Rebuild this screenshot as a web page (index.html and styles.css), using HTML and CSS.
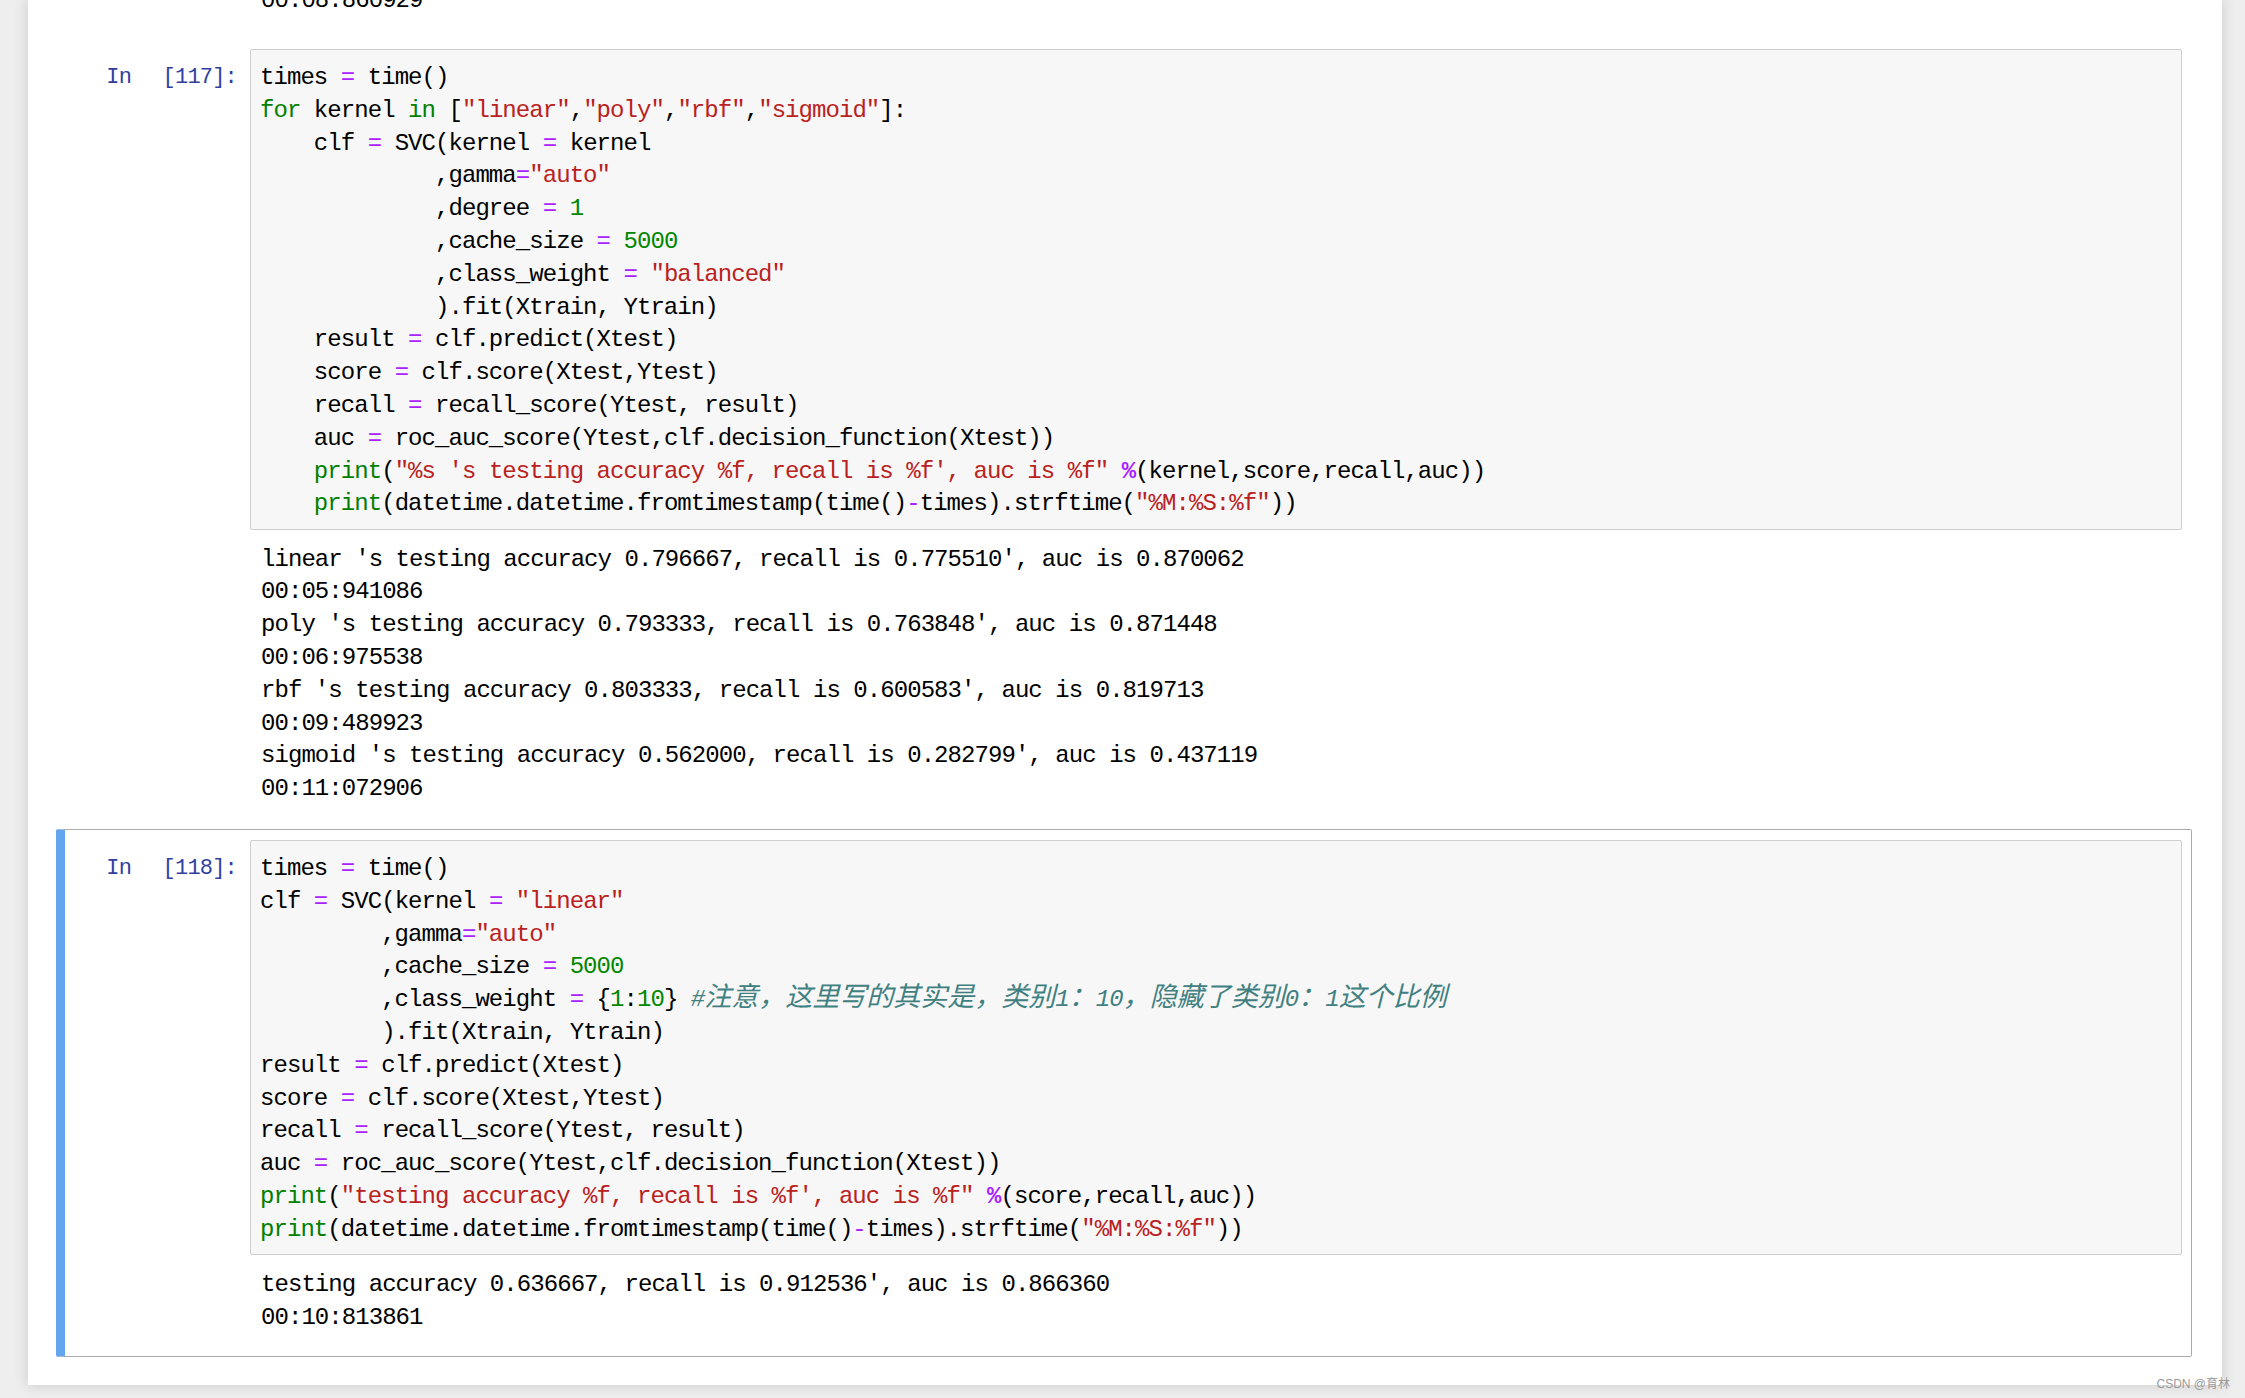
FILE: index.html
```html
<!DOCTYPE html>
<html lang="en">

<head>
  <meta charset="UTF-8" />
  <title>SVC kernels - Notebook</title>
  <link rel="stylesheet" href="styles.css">
</head>

<body>

  <div class="notebook">

    <!-- Tail of the previous cell output -->
    <div class="prev-output">
      <pre>00:08:860929</pre>
    </div>

    <!-- Cell 117 -->
    <div class="cell">
      <div class="input">
        <div class="prompt">In <span>[117]:</span></div>
        <pre class="input-area">times <span class="op">=</span> time()
<span class="kw">for</span> kernel <span class="kw">in</span> [<span class="str">"linear"</span>,<span class="str">"poly"</span>,<span class="str">"rbf"</span>,<span class="str">"sigmoid"</span>]:
    clf <span class="op">=</span> SVC(kernel <span class="op">=</span> kernel
             ,gamma<span class="op">=</span><span class="str">"auto"</span>
             ,degree <span class="op">=</span> <span class="num">1</span>
             ,cache_size <span class="op">=</span> <span class="num">5000</span>
             ,class_weight <span class="op">=</span> <span class="str">"balanced"</span>
             ).fit(Xtrain, Ytrain)
    result <span class="op">=</span> clf.predict(Xtest)
    score <span class="op">=</span> clf.score(Xtest,Ytest)
    recall <span class="op">=</span> recall_score(Ytest, result)
    auc <span class="op">=</span> roc_auc_score(Ytest,clf.decision_function(Xtest))
    <span class="bi">print</span>(<span class="str">"%s 's testing accuracy %f, recall is %f', auc is %f"</span> <span class="op bold">%</span>(kernel,score,recall,auc))
    <span class="bi">print</span>(datetime.datetime.fromtimestamp(time()<span class="op">-</span>times).strftime(<span class="str">"%M:%S:%f"</span>))</pre>
      </div>
      <div class="output">
        <pre>linear 's testing accuracy 0.796667, recall is 0.775510', auc is 0.870062
00:05:941086
poly 's testing accuracy 0.793333, recall is 0.763848', auc is 0.871448
00:06:975538
rbf 's testing accuracy 0.803333, recall is 0.600583', auc is 0.819713
00:09:489923
sigmoid 's testing accuracy 0.562000, recall is 0.282799', auc is 0.437119
00:11:072906</pre>
      </div>
    </div>

    <!-- Cell 118 (selected) -->
    <div class="cell selected">
      <div class="input">
        <div class="prompt">In <span>[118]:</span></div>
        <pre class="input-area">times <span class="op">=</span> time()
clf <span class="op">=</span> SVC(kernel <span class="op">=</span> <span class="str">"linear"</span>
         ,gamma<span class="op">=</span><span class="str">"auto"</span>
         ,cache_size <span class="op">=</span> <span class="num">5000</span>
         ,class_weight <span class="op">=</span> {<span class="num">1</span>:<span class="num">10</span>} <span class="cm">#<span class="cjk">注意，这里写的其实是，类别</span>1<span class="cjk">：</span>10<span class="cjk">，隐藏了类别</span>0<span class="cjk">：</span>1<span class="cjk">这个比例</span></span>
         ).fit(Xtrain, Ytrain)
result <span class="op">=</span> clf.predict(Xtest)
score <span class="op">=</span> clf.score(Xtest,Ytest)
recall <span class="op">=</span> recall_score(Ytest, result)
auc <span class="op">=</span> roc_auc_score(Ytest,clf.decision_function(Xtest))
<span class="bi">print</span>(<span class="str">"testing accuracy %f, recall is %f', auc is %f"</span> <span class="op bold">%</span>(score,recall,auc))
<span class="bi">print</span>(datetime.datetime.fromtimestamp(time()<span class="op">-</span>times).strftime(<span class="str">"%M:%S:%f"</span>))</pre>
      </div>
      <div class="output">
        <pre>testing accuracy 0.636667, recall is 0.912536', auc is 0.866360
00:10:813861</pre>
      </div>
    </div>

  </div>

  <div class="watermark">CSDN @育林</div>

</body>

</html>
```

FILE: styles.css
```css
* {
  box-sizing: border-box;
}

body {
  margin: 0;
  height: 1398px;
  overflow: hidden;
  background: #eee;
  font-family: 'Liberation Mono', 'Noto Sans CJK SC', monospace;
  color: #000;
}

pre {
  margin: 0;
  font-family: 'Liberation Mono', 'Noto Sans CJK SC', monospace;
  font-size: 24px;
  letter-spacing: -0.94px;
  line-height: 32.8px;
  white-space: pre;
}

/* Notebook sheet */
.notebook {
  margin-left: 28px;
  width: 2194px;
  padding: 0 30px 28px 28px;
  background: #fff;
  box-shadow: 0 0 12px 1px rgba(87, 87, 87, 0.2);
}

.prev-output {
  height: 38px;
  overflow: hidden;
  padding-left: 205px;
}

.prev-output pre {
  margin-top: -15px;
}

/* Cells */
.cell {
  border: 1px solid transparent;
  border-left: 9px solid transparent;
  border-radius: 2px;
  padding: 10px 9px 12px 0;
}

.cell.selected {
  border-color: #ababab;
  border-left-color: #64a5f0;
}

.input {
  display: flex;
}

.prompt {
  flex: none;
  width: 185px;
  padding: 13px 13px 0 0;
  text-align: right;
  color: #303f9f;
  font-size: 22px;
  letter-spacing: -0.8px;
  line-height: 32.8px;
  white-space: nowrap;
}

.prompt span {
  margin-left: 19px;
}

.input-area {
  flex: 1;
  border: 1px solid #cfcfcf;
  border-radius: 2px;
  background: #f7f7f7;
  padding: 12px 9px 7.4px;
}

.output {
  padding: 14px 0 10px 196px;
}

/* Syntax colours */
.kw {
  color: #008000;
}

.bi {
  color: #008000;
}

.op {
  color: #aa22ff;
}

.op.bold {
  font-weight: bold;
}

.str {
  color: #ba2121;
}

.num {
  color: #008800;
}

.cm {
  color: #408080;
  font-style: italic;
}

.cjk {
  font-family: 'Noto Sans CJK SC', sans-serif;
  font-size: 27px;
  letter-spacing: 0;
  line-height: 20px;
}

.watermark {
  position: absolute;
  right: 15px;
  bottom: 7px;
  font-family: 'Liberation Sans', 'Noto Sans CJK SC', sans-serif;
  font-size: 12px;
  color: #999;
}
```
